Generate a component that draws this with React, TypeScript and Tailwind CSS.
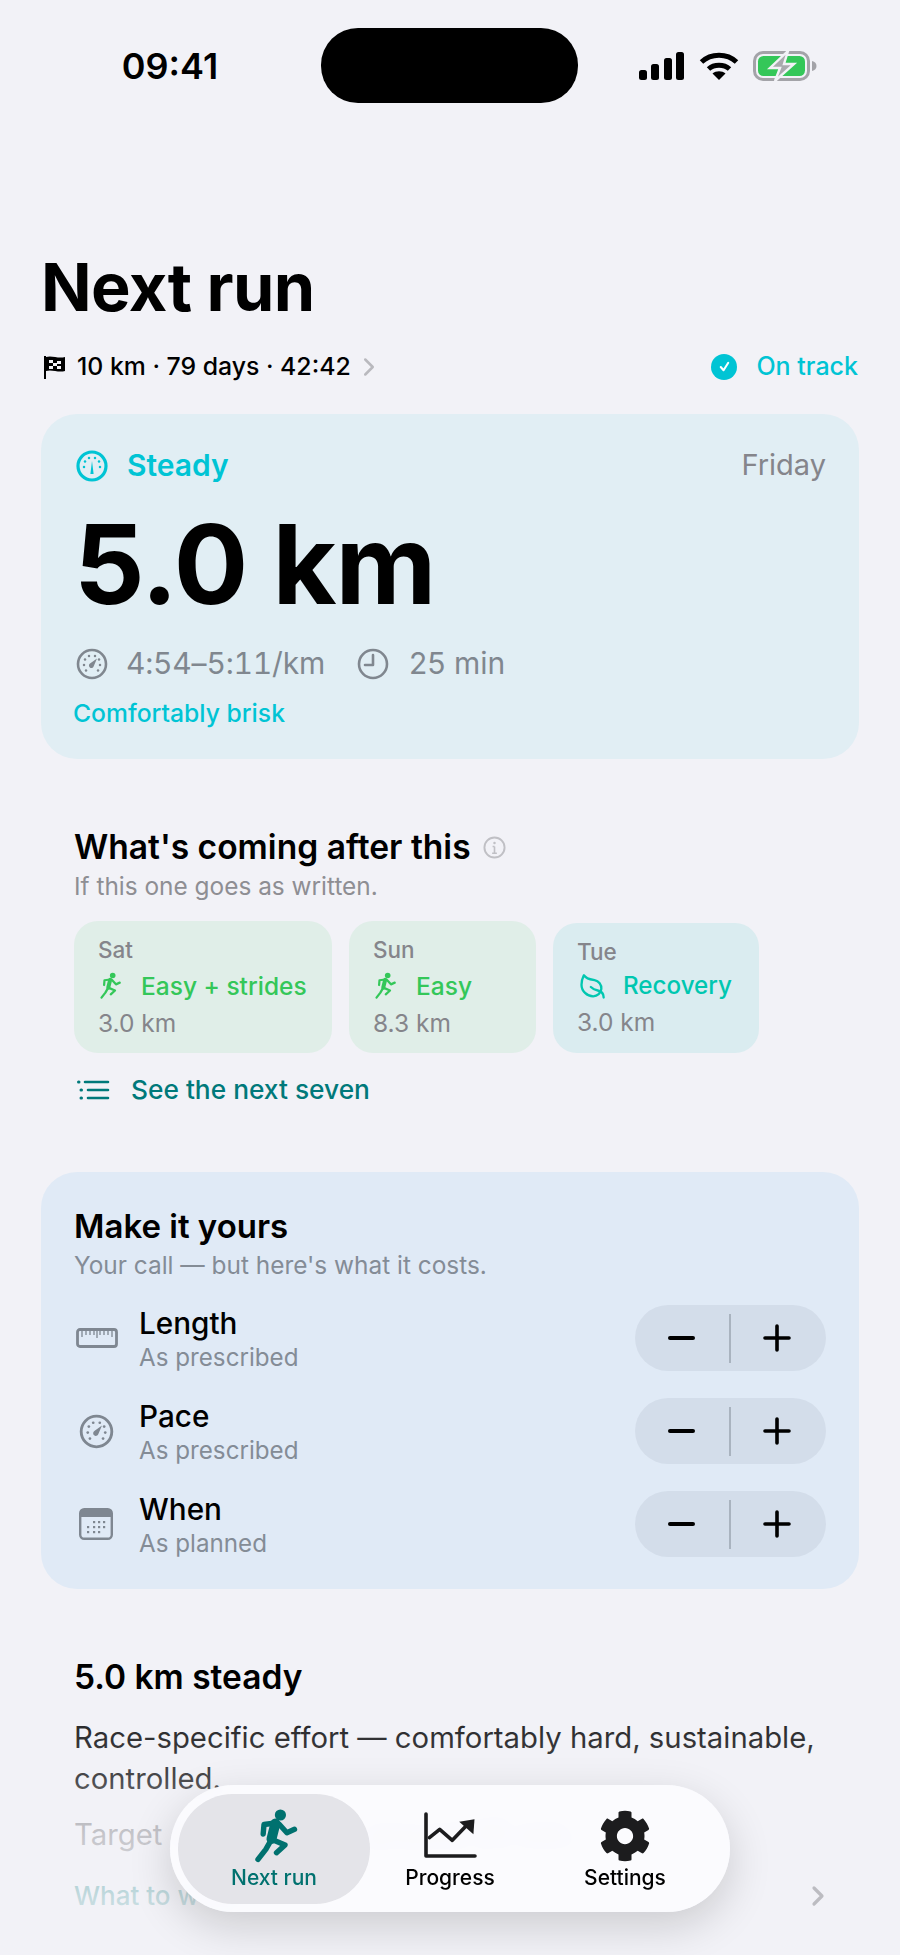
import React from 'react';
import { ChevronRight, Leaf } from 'lucide-react';
import { FaCog } from 'react-icons/fa';

const RunIcon: React.FC<{ className?: string; thin?: boolean }> = ({ className, thin }) => (
  <svg viewBox="0 0 60 60" className={className} fill="none" stroke="currentColor" strokeLinecap="round" strokeLinejoin="round">
    <circle cx="29.4" cy="9" r="5.6" fill="currentColor" stroke="none" />
    <path d="M24.4 17.5L20.5 33" strokeWidth={thin ? 8 : 10} />
    <path d="M24.4 17L13 18.5L12.2 28M28 18L35.9 26.7L43.5 23.3M20.5 33.3L14.8 43.3L7 53.3M20.5 33.3L34 39L25.5 46.7" strokeWidth={thin ? 4.5 : 5.4} />
  </svg>
);

const ChartIcon: React.FC = () => (
  <svg viewBox="0 0 60 60" className="w-[60px] h-[60px] text-[#1c1c1e]" fill="none" stroke="currentColor" strokeLinecap="round" strokeLinejoin="round">
    <path d="M6 8V50H55" strokeWidth="3.6" />
    <path d="M9.4 31.7L19.7 23.3L32.3 34.3L47 19" strokeWidth="3.6" />
    <path d="M54.5 13.3L39.2 15.7L53.4 28.3Z" fill="currentColor" stroke="none" />
  </svg>
);

// gauge with ticks round the top and a needle, used in three places
const GaugeIcon: React.FC<{ className?: string; down?: boolean }> = ({ className, down }) => (
  <svg viewBox="0 0 32 32" className={className} fill="none" stroke="currentColor">
    <circle cx="16" cy="16" r="14" strokeWidth={down ? 3.2 : 2.6} />
    {[[8, 17], [9, 11.5], [13, 8], [19, 8], [23, 11.5], [24, 17], [10, 22.5], [22, 22.5]].map(([x, y], i) =>
      down && i > 5 ? null : <circle key={i} cx={x} cy={y} r="1.25" fill="currentColor" stroke="none" />
    )}
    {down ? (
      <path d="M16 11L17.6 24H14.4Z" fill="currentColor" stroke="none" />
    ) : (
      <path d="M21 10.5L17.6 18.4A2.4 2.4 0 1 1 14 15.6Z" fill="currentColor" stroke="none" />
    )}
  </svg>
);

const Stepper: React.FC = () => (
  <div className="w-[191px] h-[66px] rounded-full bg-[#d3ddea] flex items-center shrink-0">
    <div className="flex-1 flex items-center justify-center">
      <div className="w-[27px] h-[4px] rounded-full bg-black" />
    </div>
    <div className="w-[2px] h-[49px] bg-[#a9b3bf]" />
    <div className="flex-1 flex items-center justify-center pr-[2px]">
      <svg viewBox="0 0 28 28" className="w-[28px] h-[28px]" stroke="black" strokeWidth="3.6" strokeLinecap="round">
        <path d="M2 14H26M14 2V26" />
      </svg>
    </div>
  </div>
);

const Chip: React.FC<{ day: string; label: string; km: string; teal?: boolean; width: string }> = ({ day, label, km, teal, width }) => (
  <div className={`${width} ${teal ? 'h-[130px] bg-[#daecf0]' : 'h-[132px] bg-[#e0eee8]'} rounded-[24px] pl-[24px] pt-[15px]`}>
    <div className="text-[22.5px] leading-[28px] font-medium text-[#85858b]">{day}</div>
    <div className={`flex items-center h-[38px] font-medium ${teal ? 'mt-[2px] text-[24.2px] text-[#00c7b0]' : 'mt-[3px] text-[24.5px] text-[#34c759]'}`}>
      {teal ? (
        <Leaf className="w-[28px] h-[28px] ml-[1px] mr-[17px] -scale-x-100" strokeWidth={2} />
      ) : (
        <RunIcon thin className="w-[30px] h-[30px] mr-[13px]" />
      )}
      {label}
    </div>
    <div className={`text-[24.5px] leading-[32px] text-[#85858b] ${teal ? 'mt-0' : 'mt-[2px]'}`}>{km}</div>
  </div>
);

const TweakRow: React.FC<{ title: string; sub: string; icon: React.ReactNode }> = ({ title, sub, icon }) => (
  <div className="flex items-center h-[66px]">
    <div className="w-[65px] flex items-center justify-start shrink-0 text-[#7f8791]">{icon}</div>
    <div className="flex-1 pt-[2px]">
      <div className="text-[29.7px] leading-[36px] font-medium text-black">{title}</div>
      <div className="text-[24.2px] leading-[32px] mt-[1px] text-[#848c96]">{sub}</div>
    </div>
    <Stepper />
  </div>
);

export default function App() {
  return (
    <div className="relative w-[900px] h-[1955px] overflow-hidden bg-[#f2f2f7] pt-[28px] [font-family:Inter,sans-serif] text-black">
      {/* Status bar */}
      <div className="flex items-center h-[75px]">
        <div className="w-[321px] text-center pl-[19px] text-[36px] font-semibold leading-none">09:41</div>
        <div className="w-[257px] h-[75px] rounded-[37px] bg-black" />
        <div className="flex items-center ml-[61px] gap-[15px]">
          <svg viewBox="0 0 45 28" className="w-[45px] h-[28px]" fill="black">
            <rect x="0" y="18" width="8" height="10" rx="2.5" />
            <rect x="12" y="12" width="8" height="16" rx="2.5" />
            <rect x="25" y="6" width="8" height="22" rx="2.5" />
            <rect x="37" y="0" width="8" height="28" rx="2.5" />
          </svg>
          <svg viewBox="0 0 40 28" className="w-[40px] h-[28px]" fill="none" stroke="black" strokeWidth="5">
            <path d="M2.5 10C12 1 28 1 37.5 10" />
            <path d="M9.5 17C15 12 25 12 30.5 17" />
            <path d="M20 28L13.5 21.5C17 18.5 23 18.5 26.5 21.5Z" fill="black" stroke="none" />
          </svg>
          <svg viewBox="0 0 64 30" className="w-[64px] h-[30px] -ml-[1px]">
            <rect x="1.5" y="1.5" width="54" height="27" rx="8.5" fill="none" stroke="#a3a3a8" strokeWidth="3" />
            <rect x="5" y="5" width="47" height="20" rx="5.5" fill="#34c759" />
            <path d="M59 10C62 10.5 63.5 12.5 63.5 15C63.5 17.5 62 19.5 59 20Z" fill="#a3a3a8" />
            <path d="M35 0L17 17H27L22 30L41 13H31Z" fill="#a9a9ae" stroke="#f2f2f7" strokeWidth="2.4" />
          </svg>
        </div>
      </div>

      <main className="px-[41px]">
        <h1 className="mt-[144px] mb-[-1px] text-[66.5px] leading-[80px] font-bold tracking-[-0.6px]">Next run</h1>

        {/* Goal line */}
        <div className="mt-[24px] h-[32px] flex items-center justify-between pt-[1px] pr-[1px]">
          <div className="flex items-center ml-[2px] text-[24.8px] font-medium">
            <svg viewBox="0 0 24 24" className="w-[24px] h-[24px] mr-[10px]">
              <path d="M2 1V24" stroke="black" strokeWidth="2" />
              <path d="M3 2C9 0 15 4 22 2V16C15 18 9 14 3 16Z" fill="black" />
              <path d="M6 5H10V8H6ZM14 6H18V9H14ZM10 8H14V11H10ZM6 11H10V14H6ZM14 11H18V14H14Z" fill="#f2f2f7" />
            </svg>
            10 km · 79 days · 42:42
            <ChevronRight className="w-[30px] h-[30px] ml-[3px] text-[#b9b9be]" strokeWidth={2} />
          </div>
          <div className="flex items-center text-[25px] font-medium text-[#00c4d4]">
            <div className="w-[26px] h-[26px] rounded-full bg-[#00c4d4] flex items-center justify-center mr-[19px]">
              <svg viewBox="0 0 16 16" className="w-[15px] h-[15px]" fill="none" stroke="white" strokeWidth="2.2" strokeLinecap="round" strokeLinejoin="round">
                <path d="M4 8.5L7 12L12 4" />
              </svg>
            </div>
            On track
          </div>
        </div>

        {/* Today card */}
        <section className="mt-[32px] h-[345px] rounded-[36px] bg-[#e1eef4] px-[33px] pt-[31px]">
          <div className="flex items-center justify-between h-[40px]">
            <div className="flex items-center text-[30px] font-semibold text-[#00c4d4] pt-[1px]">
              <GaugeIcon down className="w-[32px] h-[32px] mr-[19px] ml-[2px]" />
              Steady
            </div>
            <div className="text-[29px] text-[#85858b]">Friday</div>
          </div>
          <div className="mt-[24px] h-[110px] text-[110.5px] leading-[110px] font-bold tracking-[-1px]">5.0 km</div>
          <div className="mt-[24px] h-[40px] flex items-center text-[30px] text-[#80878f] pt-[1px]">
            <GaugeIcon className="w-[32px] h-[32px] mr-[18px] ml-[2px]" />
            <span className="tabular-nums tracking-[-0.2px]">4:54–5:11/km</span>
            <svg viewBox="0 0 32 32" className="w-[32px] h-[32px] ml-[32px] mr-[20px]" fill="none" stroke="currentColor" strokeWidth="2.6" strokeLinecap="round" strokeLinejoin="round">
              <circle cx="16" cy="16" r="14" />
              <path d="M16 7V17H8" />
            </svg>
            25 min
          </div>
          <div className="mt-[14px] -ml-[1px] text-[24.7px] leading-[32px] font-medium text-[#00c4d4]">Comfortably brisk</div>
        </section>

        {/* What's next */}
        <section className="px-[33px]">
          <div className="mt-[68px] h-[40px] flex items-center text-[33.6px] font-semibold">
            What's coming after this
            <svg viewBox="0 0 24 24" className="w-[23px] h-[23px] ml-[12px] text-[#c0c0c5]" fill="none" stroke="currentColor" strokeWidth="2">
              <circle cx="12" cy="12" r="10.5" />
              <path d="M12 11V18M9.5 18H14.5M10 11H12" strokeWidth="1.7" />
              <circle cx="12" cy="7.2" r="1.3" fill="currentColor" stroke="none" />
            </svg>
          </div>
          <div className="mt-[3px] text-[24.4px] leading-[32px] text-[#8e8e93]">If this one goes as written.</div>
          <div className="mt-[19px] flex items-center gap-[17px]">
            <Chip width="w-[258px]" day="Sat" label="Easy + strides" km="3.0 km" />
            <Chip width="w-[187px]" day="Sun" label="Easy" km="8.3 km" />
            <div className="pt-[1px]">
              <Chip width="w-[206px]" day="Tue" label="Recovery" km="3.0 km" teal />
            </div>
          </div>
          <div className="mt-[19px] h-[36px] flex items-center text-[26.3px] font-medium text-[#00797a]">
            <svg viewBox="0 0 33 20" className="w-[33px] h-[20px] ml-[3px] mr-[21px]" fill="none" stroke="currentColor" strokeWidth="2.6" strokeLinecap="round">
              <path d="M8 2H31M11 10H31M11 18H31" />
              <path d="M1.5 2H2M4 10H4.5M4 18H4.5" strokeWidth="3" />
            </svg>
            See the next seven
          </div>
        </section>

        {/* Make it yours */}
        <section className="mt-[64px] h-[417px] rounded-[36px] bg-[#e0eaf6] px-[33px] pt-[33px]">
          <div className="text-[33px] leading-[42px] font-semibold">Make it yours</div>
          <div className="mt-[3px] text-[24.4px] leading-[30px] text-[#848c96]">Your call — but here's what it costs.</div>
          <div className="mt-[25px] flex flex-col gap-[27px]">
            <TweakRow
              title="Length"
              sub="As prescribed"
              icon={
                <svg viewBox="0 0 42 20" className="w-[42px] h-[20px] ml-[2px]" fill="none" stroke="currentColor">
                  <rect x="1.5" y="1.5" width="39" height="17" rx="2.5" strokeWidth="2.8" />
                  <path d="M6 2V9M10 2V7M14 2V7M18 2V7M21 2V10M24 2V7M28 2V7M32 2V7M36 2V9" strokeWidth="1.3" />
                </svg>
              }
            />
            <TweakRow title="Pace" sub="As prescribed" icon={<GaugeIcon className="w-[35px] h-[35px] ml-[5px]" />} />
            <TweakRow
              title="When"
              sub="As planned"
              icon={
                <svg viewBox="0 0 34 32" className="w-[34px] h-[32px] ml-[5px]">
                  <rect x="1.2" y="1.2" width="31.6" height="29.6" rx="4" fill="none" stroke="currentColor" strokeWidth="2.4" />
                  <path d="M1 5C1 2.8 2.8 1 5 1H29C31.2 1 33 2.8 33 5V9H1Z" fill="currentColor" />
                  {[[15, 14], [20, 14], [25, 14], [9, 19], [15, 19], [20, 19], [25, 19], [9, 24], [15, 24], [20, 24]].map(([x, y]) => (
                    <rect key={`${x}-${y}`} x={x - 1} y={y - 1} width="2.2" height="2.2" fill="currentColor" />
                  ))}
                </svg>
              }
            />
          </div>
        </section>

        {/* Session notes */}
        <section className="px-[33px]">
          <div className="mt-[68px] text-[33.5px] leading-[40px] font-semibold">5.0 km steady</div>
          <p className="mt-[20px] text-[29.3px] leading-[41px] text-[#1c1c1e]">Race-specific effort — comfortably hard, sustainable, controlled.</p>
          <p className="mt-[16px] text-[29.3px] leading-[40px] text-[#8e8e93]">Target 4:54–5:11/km, around 25 min.</p>
          <div className="mt-[23px] h-[36px] text-[26px] leading-[36px] font-medium text-[#00797a]">What to wear</div>
        </section>
      </main>

      {/* Fade under the tab bar */}
      <div className="absolute left-0 right-0 bottom-0 h-[255px] pointer-events-none bg-[linear-gradient(to_bottom,rgba(242,242,247,0)_0%,rgba(242,242,247,0.2)_30%,rgba(242,242,247,0.55)_53%,rgba(242,242,247,0.8)_77%,rgba(242,242,247,0.95)_100%)]" />
      <ChevronRight className="absolute left-[802px] top-[1877px] w-[32px] h-[38px] text-[#bcbcc1]" strokeWidth={2.4} />

      {/* Tab bar */}
      <nav className="absolute left-[170px] top-[1785px] w-[560px] h-[127px] rounded-[64px] bg-[#fbfbfe]/95 backdrop-blur-sm shadow-[0_14px_44px_rgba(0,0,0,0.16)] flex items-center pl-[8px]">
        <div className="w-[192px] h-[110px] rounded-[55px] bg-[#e4e4e9] flex flex-col items-center pt-[12px] text-[#00716f]">
          <RunIcon className="w-[60px] h-[60px] ml-[13px]" />
          <div className="text-[21px] leading-[24px] font-medium">Next run</div>
        </div>
        <div className="w-[160px] h-[110px] flex flex-col items-center pt-[12px]">
          <ChartIcon />
          <div className="text-[21px] leading-[24px] font-medium">Progress</div>
        </div>
        <div className="w-[190px] h-[110px] flex flex-col items-center pt-[12px]">
          <div className="w-[60px] h-[60px] flex items-center justify-center">
            <FaCog className="w-[52px] h-[52px] text-[#1c1c1e]" />
          </div>
          <div className="text-[21px] leading-[24px] font-medium">Settings</div>
        </div>
      </nav>
    </div>
  );
}
